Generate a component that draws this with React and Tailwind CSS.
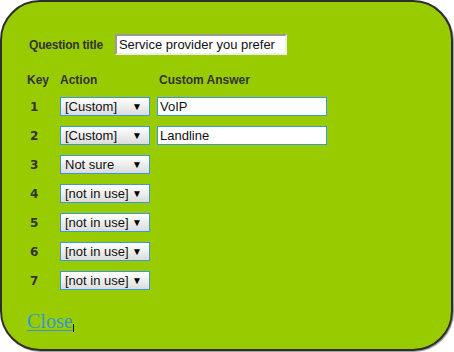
import React from "react";

const rows = [
  { key: 1, action: "[Custom]", answer: "VoIP" },
  { key: 2, action: "[Custom]", answer: "Landline" },
  { key: 3, action: "Not sure" },
  { key: 4, action: "[not in use]" },
  { key: 5, action: "[not in use]" },
  { key: 6, action: "[not in use]" },
  { key: 7, action: "[not in use]" },
];

const Select = ({ value }) => (
  <div className="flex h-[19px] w-[90px] items-center justify-between border border-[#3a9ad9] bg-gradient-to-b from-white to-[#dcdcdc] pl-[4px] pr-[7px] text-[13px] text-[#111]">
    <span className="leading-none">{value}</span>
    <span className="text-[10px] leading-none text-black">▼</span>
  </div>
);

export default function App() {
  return (
    <div className="h-[352px] w-[454px] bg-white font-['Liberation_Sans',Arial,sans-serif]">
      <div className="h-[351px] w-[453px] rounded-[40px] border-2 border-[#2e2e2e] bg-[#99cc00] pl-[25px] pt-[32px] shadow-[1px_1px_1px_rgba(0,0,0,0.4)]">
        {/* Question title */}
        <div className="flex items-center">
          <span className="ml-[2px] text-[12px] font-bold tracking-[-0.2px] text-[#333]">Question title</span>
          <div className="ml-[12px] flex h-[21px] w-[172px] items-center border-2 border-b-[#eee] border-l-[#999] border-r-[#eee] border-t-[#999] bg-white pl-[2px] text-[13px] text-[#111]">
            Service provider you prefer
          </div>
        </div>

        {/* Column headers */}
        <div className="mt-[17px] flex h-[16px] items-center text-[12px] font-bold text-[#333]">
          <span className="w-[33px]">Key</span>
          <span className="w-[99px]">Action</span>
          <span>Custom Answer</span>
        </div>

        {/* Answer rows */}
        <div className="mt-[9px] flex flex-col gap-[10px]">
          {rows.map((row) => (
            <div key={row.key} className="flex h-[19px] items-center">
              <span className="w-[33px] pl-[3px] font-['DejaVu_Sans',sans-serif] text-[12px] font-bold text-[#333]">
                {row.key}
              </span>
              <Select value={row.action} />
              {row.answer && (
                <div className="ml-[7px] flex h-[19px] w-[170px] items-center border border-[#3a9ad9] bg-white pl-[2px] text-[13px] text-[#111]">
                  {row.answer}
                </div>
              )}
            </div>
          ))}
        </div>

        <div className="mt-[19px] flex items-end">
          <a href="#" className="font-['Liberation_Serif',serif] text-[20px] leading-[24px] text-[#3399cc] underline decoration-1 underline-offset-2">
            Close
          </a>
          <span className="mb-[1px] h-[8px] w-[1px] bg-black" />
        </div>
      </div>
    </div>
  );
}
